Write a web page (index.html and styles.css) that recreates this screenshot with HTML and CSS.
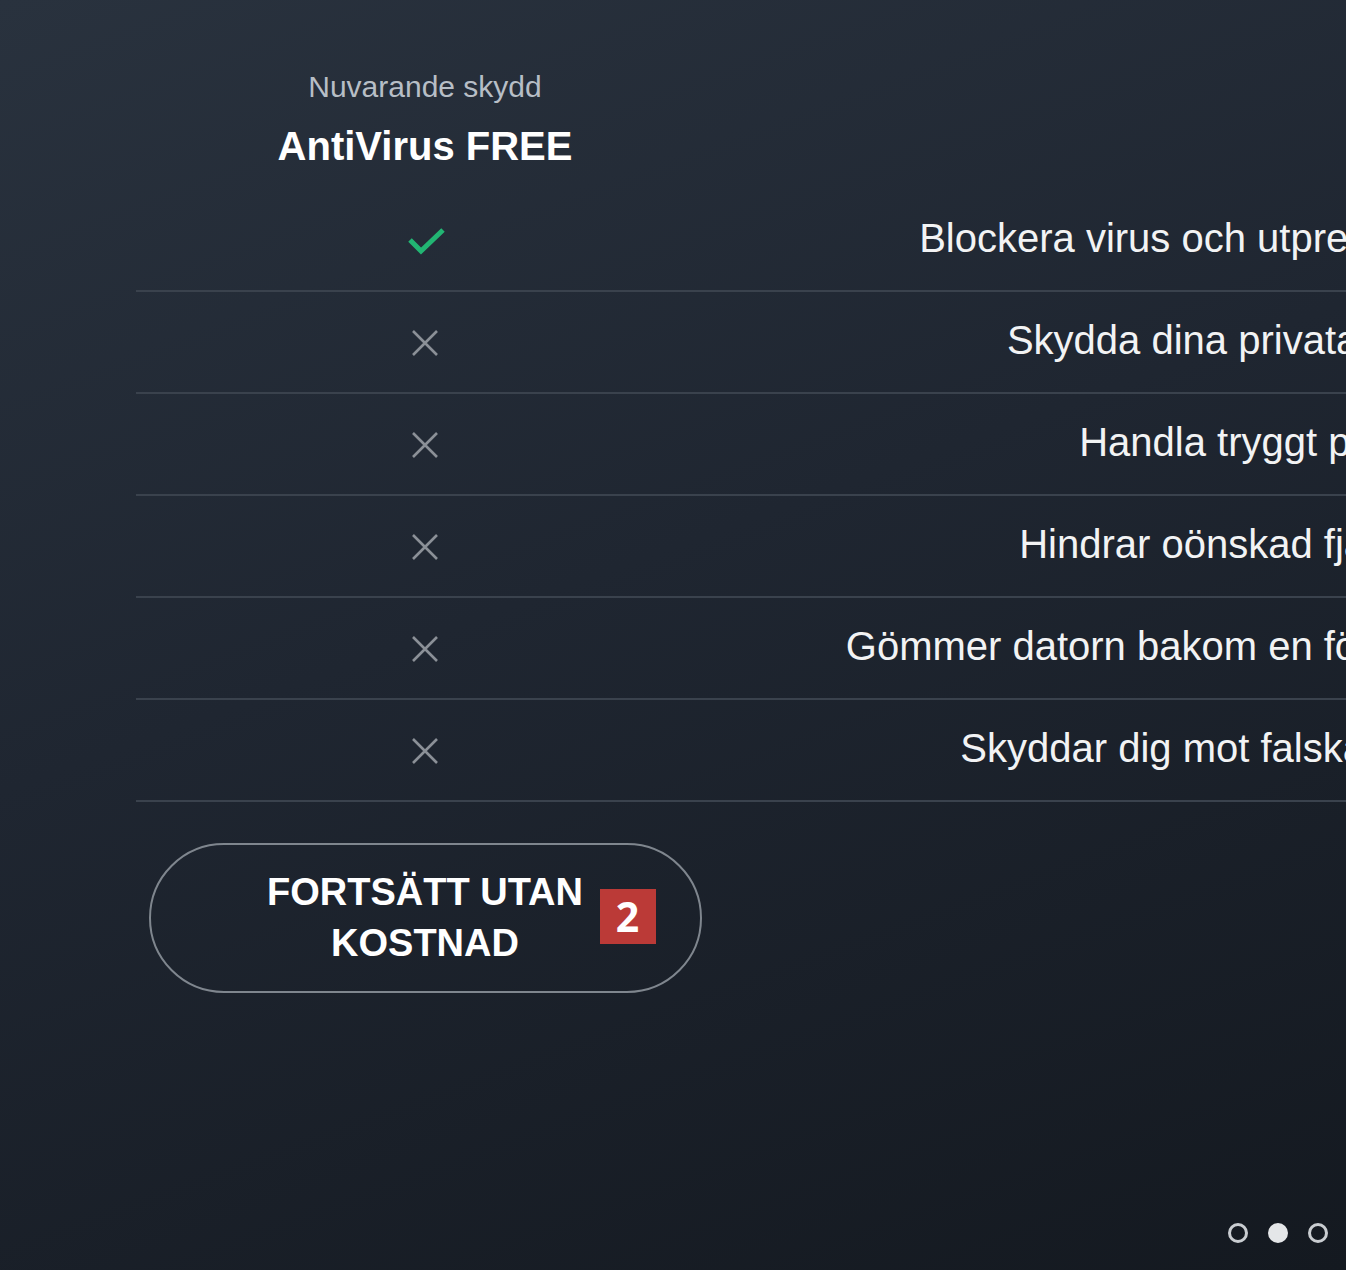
FILE: index.html
```html
<html>
<head>
<meta charset="utf-8"/>
<title>AntiVirus FREE</title>
<link rel="stylesheet" href="styles.css">
</head>
<body>
<div class="page">
	<div class="compare">
		<div class="head">
			<div class="plan-label">Nuvarande skydd</div>
			<div class="plan-name">AntiVirus FREE</div>
		</div>

		<div class="row">
			<div class="mark">
				<svg class="ok" width="40" height="32" viewBox="0 0 40 32"><polyline points="3,13 14,24 36,3" fill="none" stroke="#22b573" stroke-width="5"/></svg>
			</div>
			<div class="feature">Blockera virus och utpressningsprogram</div>
		</div>
		<div class="row">
			<div class="mark">
				<svg width="28" height="28" viewBox="0 0 28 28"><path d="M2,2 L26,26 M26,2 L2,26" stroke="#8b9097" stroke-width="2.6"/></svg>
			</div>
			<div class="feature">Skydda dina privata dokument</div>
		</div>
		<div class="row">
			<div class="mark">
				<svg width="28" height="28" viewBox="0 0 28 28"><path d="M2,2 L26,26 M26,2 L2,26" stroke="#8b9097" stroke-width="2.6"/></svg>
			</div>
			<div class="feature">Handla tryggt på nätet</div>
		</div>
		<div class="row">
			<div class="mark">
				<svg width="28" height="28" viewBox="0 0 28 28"><path d="M2,2 L26,26 M26,2 L2,26" stroke="#8b9097" stroke-width="2.6"/></svg>
			</div>
			<div class="feature">Hindrar oönskad fjärråtkomst</div>
		</div>
		<div class="row">
			<div class="mark">
				<svg width="28" height="28" viewBox="0 0 28 28"><path d="M2,2 L26,26 M26,2 L2,26" stroke="#8b9097" stroke-width="2.6"/></svg>
			</div>
			<div class="feature">Gömmer datorn bakom en förbättrad brandvägg.</div>
		</div>
		<div class="row">
			<div class="mark">
				<svg width="28" height="28" viewBox="0 0 28 28"><path d="M2,2 L26,26 M26,2 L2,26" stroke="#8b9097" stroke-width="2.6"/></svg>
			</div>
			<div class="feature">Skyddar dig mot falska webbplatser</div>
		</div>

		<div class="actions">
			<div class="btn-free">FORTSÄTT UTAN<br>KOSTNAD<span class="badge">2</span></div>
		</div>
	</div>

	<div class="dots">
		<span class="dot"></span>
		<span class="dot on"></span>
		<span class="dot"></span>
	</div>
</div>
</body>
</html>
```

FILE: styles.css
```css
html, body { margin: 0; height: 100%; overflow: hidden; }
body { font-family: "Liberation Sans", Arial, sans-serif; color: #fff;
	background: linear-gradient(160deg, #29323e 0%, #1f2631 45%, #141920 100%); }

.page { display: flex; flex-direction: column; min-height: 100vh; box-sizing: border-box; }
.compare { flex: 1; padding-left: 136px; }

.head { width: 578px; height: 190px; box-sizing: border-box; padding-top: 70px; text-align: center; }
.plan-label { font-size: 30px; line-height: 34px; color: #b7bec6; }
.plan-name { font-size: 40px; line-height: 46px; font-weight: bold; margin-top: 19px; }

.row { display: grid; grid-template-columns: 578px 1122px; height: 102px; box-sizing: border-box;
	border-bottom: 2px solid #3a424d; }
.mark { display: flex; align-items: center; justify-content: center; padding-top: 1px; }
.mark .ok { margin-top: 5px; margin-left: 4px; }
.feature { display: flex; align-items: center; justify-content: center; white-space: nowrap;
	font-size: 40px; color: #f2f3f4; padding-bottom: 3px; padding-left: 2px; }

.actions { width: 578px; display: flex; justify-content: center; padding-top: 41px; }
.btn-free { position: relative; width: 553px; height: 150px; box-sizing: border-box;
	border: 2px solid #7f868e; border-radius: 75px; display: flex; flex-direction: column;
	justify-content: center; text-align: center; font-size: 38px; line-height: 51px; font-weight: bold; }
.badge { position: absolute; left: 449px; top: 44px; width: 56px; height: 55px; background: #bb3a37;
	color: #fff; font-family: "Open Sans", sans-serif; font-weight: 700; font-size: 41px; line-height: 55px;
	text-align: center; }

.dots { display: flex; justify-content: flex-end; gap: 20px; padding: 0 18px 27px 0; }
.dot { width: 20px; height: 20px; box-sizing: border-box; border-radius: 50%; border: 3px solid #c9cdd1; }
.dot.on { background: #e4e6e8; border-color: #e4e6e8; }
```
